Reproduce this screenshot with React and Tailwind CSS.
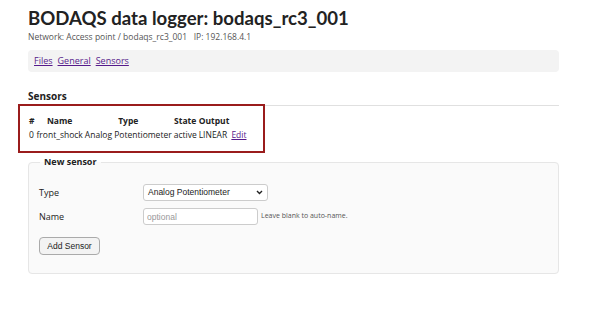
export default function App() {
  const th = "font-bold px-[1px] py-[1px]";
  const td = "px-[1px] py-[1px]";
  return (
    <div className="relative w-[602px] h-[312px] bg-white text-[#222] overflow-hidden" style={{ fontFamily: '"Open Sans", "Noto Sans", sans-serif' }}>
      <div className="w-[531px] ml-[28px] pt-[5px]">
        <h1 className="text-[18.6px] leading-[26px] font-bold text-[#222]" style={{ fontFamily: 'Lato, "Open Sans", sans-serif' }}>BODAQS data logger: bodaqs_rc3_001</h1>
        <div className="mt-0 text-[8.5px] leading-[12px] text-[#555]">
          Network: Access point / bodaqs_rc3_001&nbsp;&nbsp;&nbsp;IP: 192.168.4.1
        </div>
        <nav className="mt-[7px] h-[22px] bg-[#f3f3f3] rounded-[4px] px-[6px] flex items-center gap-[5px] text-[9px] leading-[12px]">
          <a className="text-[#551a8b] underline">Files</a>
          <a className="text-[#551a8b] underline">General</a>
          <a className="text-[#551a8b] underline">Sensors</a>
        </nav>
        <h2 className="mt-[17px] text-[10px] leading-[14px] font-bold pb-[2px] border-b border-[#e0e0e0]">Sensors</h2>
        <table className="mt-[8px] text-[8.5px] leading-[12px] border-separate border-spacing-0">
          <thead>
            <tr>
              <th className={th}>#</th>
              <th className={th}>Name</th>
              <th className={th}>Type</th>
              <th className={th}>State</th>
              <th className={th}>Output</th>
              <th className={th}></th>
            </tr>
          </thead>
          <tbody>
            <tr>
              <td className={td}>0</td>
              <td className={td}>front_shock</td>
              <td className={td}>Analog Potentiometer</td>
              <td className={td}>active</td>
              <td className={td}>LINEAR</td>
              <td className={td}><a className="text-[#551a8b] underline">Edit</a></td>
            </tr>
          </tbody>
        </table>
        <fieldset className="mt-[14px] h-[118px] border border-[#e6e6e6] rounded-[4px] bg-[#fafafa] px-[10px]">
          <legend className="ml-[1px] px-[4px] text-[9px] leading-[12px] font-bold">New sensor</legend>
          <div className="mt-[16px] flex items-center h-[17px]">
            <span className="w-[104px] text-[9px]">Type</span>
            <div className="relative w-[125px] h-[17px] bg-white border border-[#ccc] rounded-[3px] flex items-center pl-[4px] text-[8.5px] font-medium text-[#222]" style={{ fontFamily: '"Liberation Sans", Arial, sans-serif' }}>
              Analog Potentiometer
              <svg className="absolute right-[4px] top-[5px]" width="7" height="5" viewBox="0 0 7 5">
                <path d="M1 1 L3.5 3.5 L6 1" fill="none" stroke="#222" strokeWidth="1.4" />
              </svg>
            </div>
          </div>
          <div className="mt-[7px] flex items-center h-[17px]">
            <span className="w-[104px] text-[9px]">Name</span>
            <input placeholder="optional" className="w-[115px] h-[17px] bg-white border border-[#ccc] rounded-[3px] text-[8.5px] px-[3px] placeholder:text-[#999]" style={{ fontFamily: '"Liberation Sans", Arial, sans-serif' }} />
            <span className="ml-[3px] text-[7px] text-[#555]">Leave blank to auto-name.</span>
          </div>
          <button className="mt-[12px] w-[61px] h-[18px] border border-[#aaa] rounded-[4px] bg-[#f3f3f3] text-[8.5px] text-[#222]" style={{ fontFamily: '"Liberation Sans", Arial, sans-serif' }}>Add Sensor</button>
        </fieldset>
      </div>
      <div className="absolute left-[18px] top-[104px] w-[247px] h-[49px] border-2 border-[#9a1c1c] pointer-events-none"></div>
    </div>
  );
}
